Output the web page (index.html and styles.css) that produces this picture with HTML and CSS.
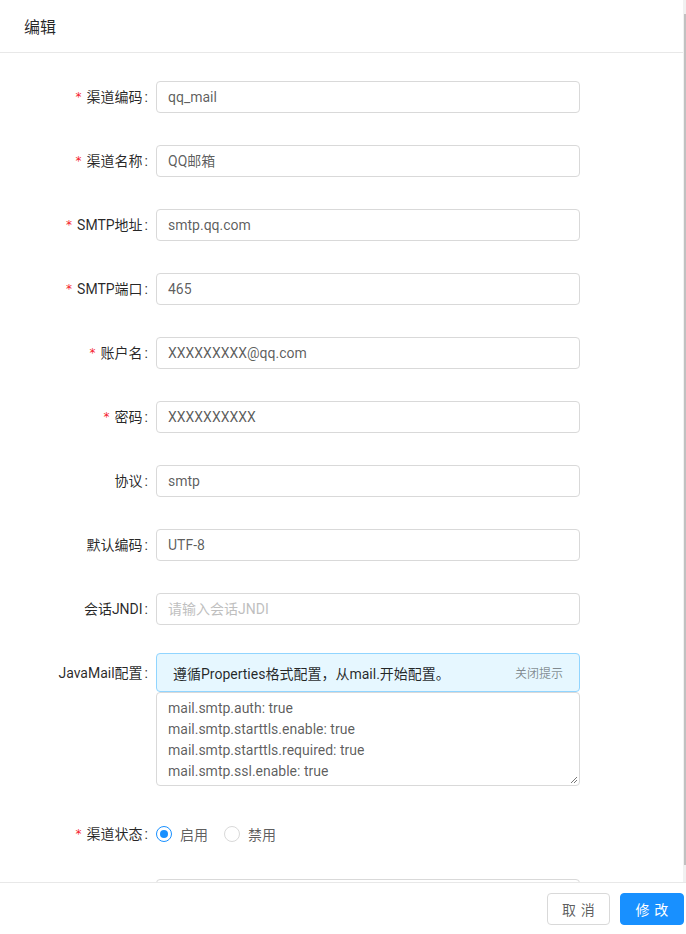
FILE: index.html
```html
<!DOCTYPE html>
<html lang="zh-CN">
<head>
<meta charset="utf-8">
<title>编辑</title>
<link rel="stylesheet" href="styles.css">
</head>
<body>
<div class="modal">
  <div class="scroll-area">
    <div class="content">
      <div class="header"><div class="title">编辑</div></div>
      <div class="body">
        <div class="row">
          <label class="label required">渠道编码</label>
          <div class="control"><div class="input">qq_mail</div></div>
        </div>
        <div class="row">
          <label class="label required">渠道名称</label>
          <div class="control"><div class="input">QQ邮箱</div></div>
        </div>
        <div class="row">
          <label class="label required">SMTP地址</label>
          <div class="control"><div class="input">smtp.qq.com</div></div>
        </div>
        <div class="row">
          <label class="label required">SMTP端口</label>
          <div class="control"><div class="input">465</div></div>
        </div>
        <div class="row">
          <label class="label required">账户名</label>
          <div class="control"><div class="input">XXXXXXXXX@qq.com</div></div>
        </div>
        <div class="row">
          <label class="label required">密码</label>
          <div class="control"><div class="input">XXXXXXXXXX</div></div>
        </div>
        <div class="row">
          <label class="label">协议</label>
          <div class="control"><div class="input">smtp</div></div>
        </div>
        <div class="row">
          <label class="label">默认编码</label>
          <div class="control"><div class="input">UTF-8</div></div>
        </div>
        <div class="row">
          <label class="label">会话JNDI</label>
          <div class="control"><div class="input placeholder">请输入会话JNDI</div></div>
        </div>
        <div class="row row-top">
          <label class="label">JavaMail配置</label>
          <div class="control control-stack">
            <div class="alert">
              <span class="alert-msg">遵循Properties格式配置，从mail.开始配置。</span>
              <span class="alert-close">关闭提示</span>
            </div>
            <div class="textarea">
              <div>mail.smtp.auth: true</div>
              <div>mail.smtp.starttls.enable: true</div>
              <div>mail.smtp.starttls.required: true</div>
              <div>mail.smtp.ssl.enable: true</div>
              <svg class="grip" width="8" height="8" viewBox="0 0 8 8"><path d="M7 1L1 7M7 4L4 7" stroke="#777" stroke-width="1" fill="none"/></svg>
            </div>
          </div>
        </div>
        <div class="row row-radio">
          <label class="label required">渠道状态</label>
          <div class="control radios">
            <span class="radio-item"><span class="radio checked"></span><span class="radio-text">启用</span></span>
            <span class="radio-item"><span class="radio"></span><span class="radio-text">禁用</span></span>
          </div>
        </div>
        <div class="row">
          <span class="label label-empty"></span>
          <div class="control"><div class="input"></div></div>
        </div>
      </div>
    </div>
    <div class="scrollbar"><div class="thumb"></div></div>
  </div>
  <div class="footer">
    <button class="btn"><span class="btn-text">取消</span></button>
    <button class="btn btn-primary"><span class="btn-text">修改</span></button>
  </div>
</div>
</body>
</html>
```
FILE: styles.css
```css
* { box-sizing: border-box; }
html, body { margin: 0; padding: 0; background: #fff; }
body {
  font-family: Roboto, "Noto Sans CJK SC", sans-serif;
  font-size: 14px;
  color: rgba(0,0,0,0.65);
}
.modal {
  width: 686px;
  height: 934px;
  display: flex;
  flex-direction: column;
  overflow: hidden;
}
.scroll-area {
  display: flex;
  height: 882px;
  flex: none;
}
.content {
  width: 683px;
  flex: none;
  overflow: hidden;
}
.scrollbar {
  width: 3px;
  background: #f1f1f1;
  padding-top: 14px;
  padding-left: 1px;
  padding-bottom: 17px;
  display: flex;
}
.thumb {
  flex: 1;
  background: #c1c1c1;
}
.header {
  height: 53px;
  padding: 0 24px;
  border-bottom: 1px solid #e8e8e8;
  display: flex;
  align-items: center;
}
.title {
  font-size: 16px;
  line-height: 22px;
  color: rgba(0,0,0,0.85);
  font-family: "Noto Sans CJK SC", sans-serif;
}
.body {
  padding-top: 24px;
}
.row {
  display: flex;
  align-items: center;
  min-height: 40px;
  margin-bottom: 24px;
}
.row-top { align-items: flex-start; }
.row-top .label { height: 39px; }
.row-radio { margin-top: 1px; margin-bottom: 21px; }
.label {
  width: 156px;
  flex: none;
  display: flex;
  align-items: center;
  justify-content: flex-end;
  color: rgba(0,0,0,0.85);
  line-height: 40px;
  font-family: Roboto, "Noto Sans CJK SC", sans-serif;
}
.label::after {
  content: ":";
  margin: 0 8px 0 2px;
}
.label-empty::after { content: none; }
.required::before {
  content: "*";
  color: #f5222d;
  margin-right: 5px;
  font-family: "DejaVu Sans", sans-serif;
  font-size: 12px;
  line-height: 1;
}
.control {
  width: 424px;
  flex: none;
}
.input {
  height: 32px;
  border: 1px solid #d9d9d9;
  border-radius: 4px;
  padding: 0 11px;
  line-height: 30px;
  color: rgba(0,0,0,0.65);
}
.placeholder { color: #bfbfbf; }
.control-stack {
  display: flex;
  flex-direction: column;
  padding-bottom: 4px;
}
.alert {
  height: 39px;
  background: #e6f7ff;
  border: 1px solid #91d5ff;
  border-radius: 4px;
  padding: 0 16px 0 16px;
  display: flex;
  align-items: center;
  justify-content: space-between;
}
.alert-msg {
  color: rgba(0,0,0,0.85);
}
.alert-close {
  font-size: 12px;
  color: rgba(0,0,0,0.45);
  font-family: "Noto Sans CJK SC", sans-serif;
}
.textarea {
  position: relative;
  height: 94px;
  border: 1px solid #d9d9d9;
  border-radius: 4px;
  padding: 5px 11px;
  line-height: 21px;
  color: rgba(0,0,0,0.65);
}
.grip {
  position: absolute;
  right: 1px;
  bottom: 1px;
}
.radios {
  display: flex;
  align-items: center;
  height: 40px;
}
.radio-item {
  display: inline-flex;
  align-items: center;
  margin-right: 8px;
}
.radio {
  width: 16px;
  height: 16px;
  border: 1px solid #d9d9d9;
  border-radius: 50%;
  display: inline-flex;
  align-items: center;
  justify-content: center;
}
.radio.checked { border-color: #1890ff; }
.radio.checked::after {
  content: "";
  width: 8px;
  height: 8px;
  border-radius: 50%;
  background: #1890ff;
}
.radio-text {
  padding: 0 8px;
  font-family: "Noto Sans CJK SC", sans-serif;
  color: rgba(0,0,0,0.65);
}
.footer {
  flex: 1;
  border-top: 1px solid #e8e8e8;
  padding: 10px 2px 0 0;
  display: flex;
  justify-content: flex-end;
  align-items: flex-start;
  gap: 10px;
}
.btn {
  height: 32px;
  padding: 0;
  border: 1px solid #d9d9d9;
  border-radius: 4px;
  background: #fff;
  color: rgba(0,0,0,0.65);
  font-size: 14px;
  font-family: "Noto Sans CJK SC", sans-serif;
  line-height: 30px;
  width: 63px;
  white-space: nowrap;
  text-align: center;
}
.btn-text {
  letter-spacing: 0.34em;
  margin-right: -0.34em;
}
.btn-primary {
  background: #1890ff;
  border-color: #1890ff;
  color: #fff;
  width: 64px;
}
```
